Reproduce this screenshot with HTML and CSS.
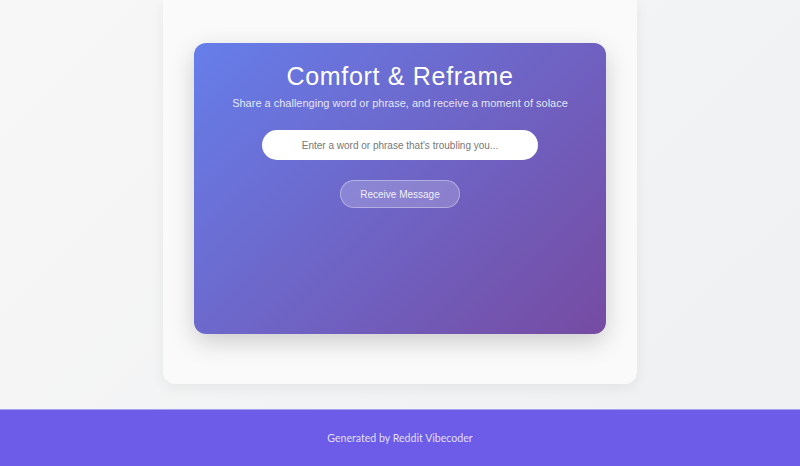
FILE: index.html
```html
<!DOCTYPE html>
<html lang="en">
<head>
<meta charset="utf-8">
<title>Comfort &amp; Reframe</title>
<link rel="stylesheet" href="styles.css">
</head>
<body>
<main class="main">
  <section class="shell">
    <div class="panel">
      <h1 class="title">Comfort &amp; Reframe</h1>
      <p class="subtitle">Share a challenging word or phrase, and receive a moment of solace</p>
      <input class="field" type="text" placeholder="Enter a word or phrase that's troubling you...">
      <button class="btn" type="button">Receive Message</button>
    </div>
  </section>
</main>
<footer class="footer">Generated by Reddit Vibecoder</footer>
</body>
</html>
```

FILE: styles.css
```css
* { box-sizing: border-box; }
html, body { margin: 0; padding: 0; }
body {
  height: 466px;
  overflow: hidden;
  display: flex;
  flex-direction: column;
  background: linear-gradient(135deg, #f7f7f7 0%, #eef0f1 100%);
  font-family: "Liberation Sans", Arial, sans-serif;
}
.main {
  flex: 1;
  display: flex;
  justify-content: center;
  align-items: flex-start;
}
.shell {
  width: 474px;
  height: 384px;
  background: #fafafa;
  border-radius: 0 0 12px 12px;
  box-shadow: 0 4px 14px rgba(0,0,0,0.06);
  padding: 43px 31px 50px;
}
.panel {
  height: 291px;
  border-radius: 12px;
  background: linear-gradient(135deg, #667eea 0%, #764ba2 100%);
  box-shadow: 0 8px 24px rgba(0,0,0,0.18);
  display: flex;
  flex-direction: column;
  align-items: center;
  padding-top: 18px;
  color: #fff;
}
.title {
  margin: 0;
  font-size: 25px;
  font-weight: 400;
  letter-spacing: 0.7px;
  line-height: 30px;
}
.subtitle {
  margin: 5px 0 0;
  font-size: 11px;
  line-height: 14px;
  color: rgba(255,255,255,0.85);
}
.field {
  margin-top: 20px;
  width: 276px;
  height: 30px;
  border-radius: 15px;
  border: 1px solid rgba(255,255,255,0.7);
  background: #fff;
  font-family: "Liberation Sans", Arial, sans-serif;
  font-size: 10px;
  text-align: center;
  color: #333;
  outline: none;
}
.field::placeholder { color: #777; }
.btn {
  margin-top: 20px;
  width: 120px;
  height: 28px;
  border-radius: 14px;
  border: 1px solid rgba(255,255,255,0.35);
  background: rgba(255,255,255,0.2);
  color: rgba(255,255,255,0.9);
  font-family: "Liberation Sans", Arial, sans-serif;
  font-size: 10px;
  padding: 0;
}
.footer {
  height: 57px;
  flex-shrink: 0;
  background: #6c5ce7;
  color: rgba(255,255,255,0.82);
  font-family: Lato, "Open Sans", sans-serif;
  font-size: 10.6px;
  display: flex;
  align-items: center;
  justify-content: center;
  border-top: 1px solid #a9a0f0;
}
```
